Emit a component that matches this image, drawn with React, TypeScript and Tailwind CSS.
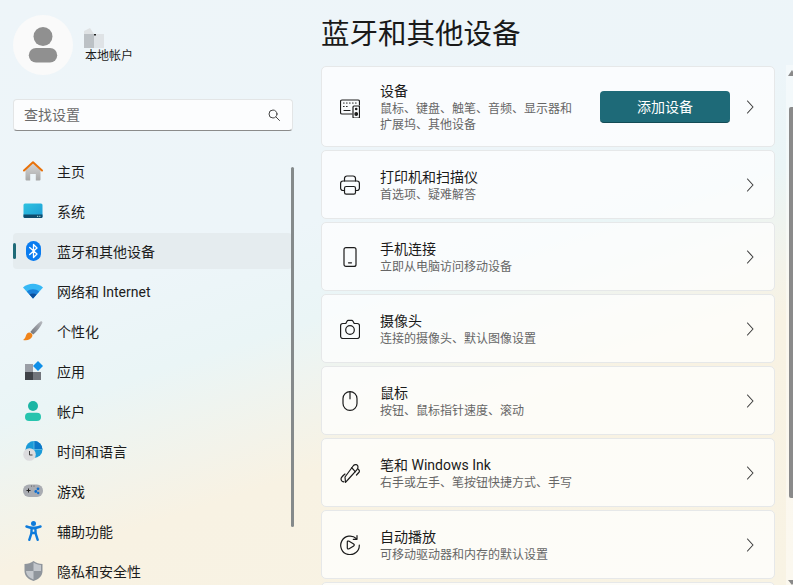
import React from "react";

const font = { fontFamily: 'Roboto, "Noto Sans CJK SC", "Noto Sans", sans-serif' };

const HomeIcon = () => (
  <svg width="20" height="20" viewBox="0 0 20 20">
    <defs>
      <linearGradient id="hb" x1="0" y1="0" x2="0" y2="1"><stop offset="0" stopColor="#d6d6d6" /><stop offset="1" stopColor="#a8a8a8" /></linearGradient>
    </defs>
    <path d="M2.500 9 10 2.500 17.500 9v9.500a1 1 0 0 1-1 1h-3.700V13H7.200v6.500H3.500a1 1 0 0 1-1-1z" fill="url(#hb)" />
    <path d="M1 9.500 10 1.200l9 8.300" fill="none" stroke="#e8710a" strokeWidth="2" strokeLinecap="round" strokeLinejoin="round" />
  </svg>
);
const SystemIcon = () => (
  <svg width="20" height="16" viewBox="0 0 20 16">
    <defs>
      <linearGradient id="sb" x1="0" y1="0" x2="1" y2="1"><stop offset="0" stopColor="#2fc3e0" /><stop offset="1" stopColor="#1c9bd6" /></linearGradient>
    </defs>
    <rect x="0.500" y="0.500" width="19" height="14.500" rx="1.500" fill="url(#sb)" />
    <path d="M.5 11.500h19V13.500a1.500 1.500 0 0 1-1.500 1.500H2a1.500 1.500 0 0 1-1.500-1.500z" fill="#0e4a6c" />
    <rect x="14" y="12.800" width="1.200" height="1.200" fill="#9cc" />
    <rect x="16.200" y="12.800" width="1.200" height="1.200" fill="#9cc" />
  </svg>
);
const BluetoothIcon = () => (
  <svg width="15" height="20" viewBox="0 0 15 20">
    <rect x="0" y="0" width="15" height="20" rx="7.400" fill="#0a7cf0" />
    <path d="M3.700 6.500 11 13 7.500 16.500V3.500L11 7 3.700 13.500" fill="none" stroke="#fff" strokeWidth="1.300" strokeLinejoin="round" strokeLinecap="round" />
  </svg>
);
const WifiIcon = () => (
  <svg width="20" height="16" viewBox="0 0 20 16">
    <path d="M0 4.500C5.500 -.5 14.500 -.5 20 4.500l-10 11z" fill="#36b8f5" />
    <path d="M3.800 8.500c3.500-3 8.900-3 12.400 0L10 15.500z" fill="#1a80d8" />
    <path d="M6.500 11.500c2-1.500 5-1.500 7 0L10 15.500z" fill="#0c4f9c" />
  </svg>
);
const BrushIcon = () => (
  <svg width="20" height="20" viewBox="0 0 20 20">
    <defs>
      <linearGradient id="br" x1="0" y1="1" x2="1" y2="0"><stop offset="0" stopColor="#6d7078" /><stop offset="1" stopColor="#b9bcc2" /></linearGradient>
    </defs>
    <path d="M17.500.5c1-.6 2.300.4 1.800 1.500-1.500 3.200-5 8-9 11.500L7.300 11C10 7.500 14 3 17.500.5z" fill="url(#br)" />
    <path d="M6.500 11.500c-2 .2-3.200 1.500-3.700 3.500-.4 1.700-1.300 3-2.800 4 3.500.8 8 .2 9.300-3.700.4-1.300-.1-2.300-1-3z" fill="#f0841a" />
  </svg>
);
const AppsIcon = () => (
  <svg width="20" height="20" viewBox="0 0 20 20">
    <rect x="2" y="3" width="8" height="8" fill="#9a9ea6" />
    <rect x="2" y="11" width="8" height="8" fill="#3f4247" />
    <rect x="10" y="11" width="8" height="8" fill="#72757b" />
    <path d="M15 0 20 5 15 10 10 5z" fill="#0f8fe8" />
  </svg>
);
const AccountIcon = () => (
  <svg width="16" height="20" viewBox="0 0 16 20">
    <circle cx="8" cy="5" r="5" fill="#1cb5a4" />
    <rect x="0" y="11.800" width="16" height="8.200" rx="4.100" fill="#27c4ae" />
  </svg>
);
const TimeIcon = () => (
  <svg width="20" height="20" viewBox="0 0 20 20">
    <circle cx="11" cy="8.500" r="8.500" fill="#1b9bd8" />
    <path d="M11 0a8.500 8.500 0 0 1 8.500 8.500H11z" fill="#0c78c8" />
    <path d="M2.500 8.500h17M11 0v17" stroke="#7fd4ee" strokeWidth=".6" />
    <circle cx="6.500" cy="13.500" r="6.300" fill="#dcdcde" />
    <path d="M6.500 10V14h3" fill="none" stroke="#444" strokeWidth="1" />
  </svg>
);
const GameIcon = () => (
  <svg width="20" height="14" viewBox="0 0 20 14">
    <rect x="0" y="0.500" width="20" height="12.500" rx="6" fill="#a9acb2" />
    <path d="M3.500 6.500h4M5.500 4.500v4" stroke="#222" strokeWidth="1" />
    <circle cx="15" cy="4.800" r="1.400" fill="#0f6fd0" />
    <circle cx="12.800" cy="7.500" r="1.400" fill="#0f6fd0" />
    <circle cx="15.200" cy="9" r="1.200" fill="#0f6fd0" />
    <circle cx="8.500" cy="2" r=".5" fill="#444" />
    <circle cx="11" cy="2" r=".5" fill="#444" />
  </svg>
);
const AccessIcon = () => (
  <svg width="17" height="20" viewBox="0 0 17 20">
    <circle cx="8.500" cy="2.500" r="2.500" fill="#0e7bdb" />
    <path d="M1.500 5.500 6.500 7.200h4l5-1.700M6.500 7.500v4.500l-2.200 6.800M10.500 7.500v4.500l2.200 6.800M6.500 12h4" fill="#0e7bdb" stroke="#0e7bdb" strokeWidth="2.400" strokeLinecap="round" strokeLinejoin="round" />
  </svg>
);
const ShieldIcon = () => (
  <svg width="19" height="20" viewBox="0 0 19 20">
    <path d="M9.500 0c2.500 2 5.500 2.800 9 3v7c0 5-3.800 8.300-9 10-5.200-1.700-9-5-9-10V3c3.500-.2 6.500-1 9-3z" fill="#8f959c" />
    <path d="M9.500 1.500c2.200 1.500 4.700 2.300 7.500 2.600V10H9.500zM9.500 10H2c.2 4 3.400 7 7.500 8.400z" fill="#c3c7cc" />
  </svg>
);

const s = { fill: "none", stroke: "#1c1c1c", strokeWidth: 1.200, strokeLinecap: "round" as const, strokeLinejoin: "round" as const };
const DevicesIcon = () => (
  <svg width="20" height="20" viewBox="0 0 20 20" {...s}>
    <path d="M12 16H2a1.500 1.500 0 0 1-1.500-1.500v-11A1.500 1.500 0 0 1 2 2h16a1.500 1.500 0 0 1 1.500 1.500V7" />
    <path d="M3.500 5h.6M6.500 5h.6M9.500 5h.6M12.500 5h.6M15.500 5h.6M3.500 8.500h.6M6.500 8.500h.6M4 12.500h6" strokeWidth="1.200" />
    <rect x="13" y="8" width="6.500" height="12" rx="1" />
    <circle cx="16.200" cy="16" r="1.300" fill="#1c1c1c" />
    <circle cx="16.200" cy="11" r=".7" fill="#1c1c1c" />
  </svg>
);
const PrinterIcon = () => (
  <svg width="20" height="20" viewBox="0 0 20 20" {...s}>
    <path d="M4.500 6V3.500A2.500 2.500 0 0 1 7 1h6a2.500 2.500 0 0 1 2.500 2.500V6" />
    <path d="M4.500 15.500H3A2.400 2.400 0 0 1 .6 13V8.500A2.500 2.500 0 0 1 3 6h14a2.500 2.500 0 0 1 2.400 2.500V13a2.400 2.400 0 0 1-2.400 2.500h-1.500" />
    <rect x="4.500" y="11.500" width="11" height="7.700" rx="1.700" />
  </svg>
);
const PhoneIcon = () => (
  <svg width="20" height="20" viewBox="0 0 20 20" {...s}>
    <rect x="4" y=".6" width="12" height="18.800" rx="2" />
    <path d="M8.500 15.800h3" />
  </svg>
);
const CameraIcon = () => (
  <svg width="20" height="20" viewBox="0 0 20 20" {...s}>
    <path d="M5.800 4.500 7 2.200A1.500 1.500 0 0 1 8.300 1.400h3.400a1.500 1.500 0 0 1 1.300.8l1.200 2.300h3.100a2.200 2.200 0 0 1 2.200 2.200v10.600a2.200 2.200 0 0 1-2.200 2.200H2.800a2.200 2.200 0 0 1-2.200-2.200V6.700a2.200 2.200 0 0 1 2.200-2.200z" />
    <circle cx="10" cy="11" r="4.300" />
  </svg>
);
const MouseIcon = () => (
  <svg width="20" height="20" viewBox="0 0 20 20" {...s}>
    <rect x="3" y=".6" width="14" height="18.800" rx="7" />
    <path d="M10 .8v7" />
  </svg>
);
const PenIcon = () => (
  <svg width="20" height="20" viewBox="0 0 20 20" {...s}>
    <path d="M13.500 2.500C15 .8 18 1.500 18 4c0 1-.5 2-1.200 2.800L9 15.500 5.500 19.300 5 14z" />
    <path d="M11.500 4.800c1.500 1.200 3 2.700 3.700 4" />
    <path d="M5 11c-2.500 2-4 3.500-4 5 0 1.500 1.500 2.800 3 2.800" />
    <path d="M18 6c1.500 1 1.800 2.500.8 3.500L16.500 12" />
  </svg>
);
const AutoplayIcon = () => (
  <svg width="20" height="20" viewBox="0 0 20 20" {...s}>
    <path d="M16.500 3.700A9.300 9.300 0 1 0 19.300 10" />
    <path d="M17 .6v3.700h-3.700" />
    <path d="M7.300 7c0-.8.800-1.200 1.400-.9l5 3a1 1 0 0 1 0 1.800l-5 3c-.6.300-1.400-.1-1.400-.9z" />
  </svg>
);

const Chevron = () => (
  <svg width="10" height="14" viewBox="0 0 10 14" fill="none" stroke="#3a3a3a" strokeWidth="1.100" strokeLinecap="round" strokeLinejoin="round">
    <path d="M2.500 1 8 7 2.500 13" />
  </svg>
);

const nav: { icon: React.ReactNode; label: string; active?: boolean }[] = [
  { icon: <HomeIcon />, label: "主页" },
  { icon: <SystemIcon />, label: "系统" },
  { icon: <BluetoothIcon />, label: "蓝牙和其他设备", active: true },
  { icon: <WifiIcon />, label: "网络和 Internet" },
  { icon: <BrushIcon />, label: "个性化" },
  { icon: <AppsIcon />, label: "应用" },
  { icon: <AccountIcon />, label: "帐户" },
  { icon: <TimeIcon />, label: "时间和语言" },
  { icon: <GameIcon />, label: "游戏" },
  { icon: <AccessIcon />, label: "辅助功能" },
  { icon: <ShieldIcon />, label: "隐私和安全性" },
];

const cards = [
  { icon: <PrinterIcon />, title: "打印机和扫描仪", sub: "首选项、疑难解答" },
  { icon: <PhoneIcon />, title: "手机连接", sub: "立即从电脑访问移动设备" },
  { icon: <CameraIcon />, title: "摄像头", sub: "连接的摄像头、默认图像设置" },
  { icon: <MouseIcon />, title: "鼠标", sub: "按钮、鼠标指针速度、滚动" },
  { icon: <PenIcon />, title: "笔和 Windows Ink", sub: "右手或左手、笔按钮快捷方式、手写" },
  { icon: <AutoplayIcon />, title: "自动播放", sub: "可移动驱动器和内存的默认设置" },
];

const cardCls = "flex items-center shrink-0 rounded-[5px] border border-[#e6e8e9] bg-[#ffffffb8] pl-[18px] pr-[19px]";

export default function App() {
  return (
    <div
      style={font}
      className="relative flex h-[585px] w-[793px] overflow-hidden bg-[linear-gradient(162deg,#eef5f9_0%,#edf5f9_38%,#eaf5f6_50%,#f8f2e3_68%,#f8f3e4_100%)]"
    >
      <aside className="relative flex w-[321px] shrink-0 flex-col pl-[13px]">
        <div className="mt-[15px] flex h-[60px] shrink-0 items-start">
          <div className="flex h-[60px] w-[60px] items-center justify-center rounded-full bg-[#fafafa]">
            <svg width="30" height="36" viewBox="0 0 30 36">
              <circle cx="15" cy="9.500" r="9.500" fill="#909090" />
              <rect x="0.800" y="21" width="28.400" height="14.500" rx="7.200" fill="#909090" />
            </svg>
          </div>
          <div className="ml-[11px] mt-[13px] flex flex-col">
            <svg width="21" height="20" viewBox="0 0 21 20">
              <path d="M0 3 6 0l4 6H0z" fill="#dfe2e4" />
              <rect x="0" y="6" width="10" height="14" fill="#bcc1c5" />
              <rect x="10" y="6" width="10" height="14" fill="#dfe3e6" />
              <rect x="10" y="6" width="2" height="1.500" fill="#222" />
            </svg>
            <span className="ml-[1px] text-[12px] leading-[16px] text-[#1b1b1b]">本地帐户</span>
          </div>
        </div>

        <div className="mt-[24px] flex h-[32px] w-[280px] shrink-0 items-center justify-between rounded-[4px] border border-[#e3e5e6] border-b-[#8b8b8b] bg-[#fcfdfe] pl-[10px] pr-[12px]">
          <span className="text-[14px] leading-[20px] text-[#6a6a6a]">查找设置</span>
          <svg width="12" height="12" viewBox="0 0 12 12" fill="none" stroke="#444" strokeWidth="1" strokeLinecap="round">
            <circle cx="5" cy="5" r="4" />
            <path d="M8 8l3.500 3.500" />
          </svg>
        </div>

        <nav className="mt-[22px] flex w-[279px] shrink-0 flex-col gap-[4px]">
          {nav.map((n) => (
            <div
              key={n.label}
              className={"relative flex h-[36px] shrink-0 items-center rounded-[4px] " + (n.active ? "bg-[#e5ecef]" : "")}
            >
              {n.active && <span className="absolute left-0 top-[10px] h-[16px] w-[3px] rounded-full bg-[#1e6a78]" />}
              <span className="ml-[10px] mr-[4px] flex w-[20px] shrink-0 justify-center">{n.icon}</span>
              <span className="ml-[10px] pt-[2px] text-[14px] leading-[20px] text-[#1c1c1c]">{n.label}</span>
            </div>
          ))}
        </nav>
        <div className="absolute left-[291px] top-[167px] h-[360px] w-[3px] rounded-full bg-[#858a8b]" />
      </aside>

      <main className="flex w-[454px] shrink-0 flex-col">
        <h1 className="mt-[14px] h-[42px] shrink-0 text-[28.500px] leading-[42px] text-[#1a1a1a]">蓝牙和其他设备</h1>
        <div className="mt-[10px] flex shrink-0 flex-col gap-[3px]">
          <div className={cardCls + " h-[81px]"}>
            <span className="flex w-[40px] shrink-0 pt-[2px]"><DevicesIcon /></span>
            <div className="flex w-[220px] shrink-0 flex-col">
              <span className="text-[14px] leading-[20px] text-[#1a1a1a]">设备</span>
              <span className="w-[200px] text-[12px] leading-[16px] text-[#666]">鼠标、键盘、触笔、音频、显示器和扩展坞、其他设备</span>
            </div>
            <button className="h-[32px] w-[130px] shrink-0 rounded-[4px] border-b border-b-[#134b55] bg-[#1e6a78] pt-[2px] text-[14px] text-white">添加设备</button>
            <span className="ml-auto flex"><Chevron /></span>
          </div>
          {cards.map((c) => (
            <div key={c.title} className={cardCls + " h-[69px]"}>
              <span className="flex w-[40px] shrink-0">{c.icon}</span>
              <div className="flex flex-col pt-[2px]">
                <span className="text-[14px] leading-[20px] text-[#1a1a1a]">{c.title}</span>
                <span className="text-[12px] leading-[17px] text-[#666]">{c.sub}</span>
              </div>
              <span className="ml-auto flex"><Chevron /></span>
            </div>
          ))}
          <div className={cardCls + " h-[69px]"} />
        </div>
      </main>

      <div className="absolute right-0 top-[65px] h-[520px] w-[7px] bg-[#ffffff66]">
        <div className="absolute left-[2px] top-[5px] h-0 w-0 border-x-[4px] border-b-[6px] border-x-transparent border-b-[#8a8a8a]" />
        <div className="absolute left-[3px] top-[42px] h-[391px] w-[4px] rounded-l-[2px] bg-[#8a8a8a]" />
        <div className="absolute bottom-0 left-[2px] h-0 w-0 border-x-[4px] border-t-[5px] border-x-transparent border-t-[#8a8a8a]" />
      </div>
    </div>
  );
}
